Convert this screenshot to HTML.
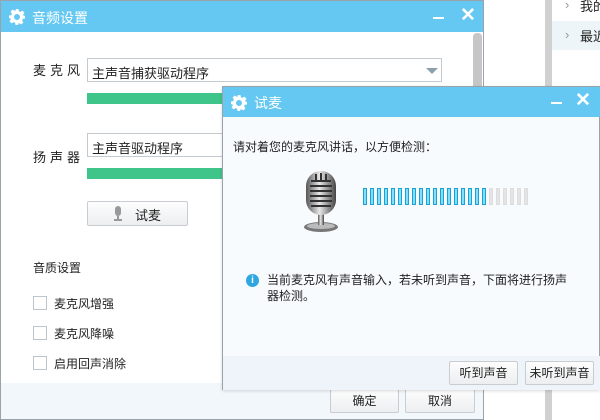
<!DOCTYPE html><html><head><meta charset="utf-8"><style>
*{margin:0;padding:0;box-sizing:border-box}
body{width:600px;height:420px;overflow:hidden;background:#fff;font-family:"Liberation Sans","Noto Sans CJK SC",sans-serif;font-size:12px;color:#222;position:relative}
.a{position:absolute;white-space:nowrap}
.tb{background:#64c8f2;color:#fff;font-size:14px}
.btn{position:absolute;border:1px solid #c9ccd0;border-radius:2px;background:linear-gradient(#fdfdfd,#eceef0);text-align:center;font-size:12px;color:#222}
.cb{position:absolute;width:14px;height:14px;border:1px solid #bcc5cc;background:#fff}
</style></head><body>
<div class="a" style="left:545px;top:0;width:7px;height:420px;background:#d0d0d0"></div>
<div class="a" style="left:552px;top:21px;width:48px;height:29px;background:#eef5f8"></div>
<div class="a" style="left:565px;top:-3px;color:#999;font-size:13px">›</div>
<div class="a" style="left:580px;top:-4px;font-size:13px">我的</div>
<div class="a" style="left:565px;top:27px;color:#999;font-size:13px">›</div>
<div class="a" style="left:580px;top:26px;font-size:13px">最近</div>
<div class="a" style="left:0;top:0;width:484px;height:420px;border:1px solid #9aa3aa;background:#fff">
<div class="a tb" style="left:0;top:0;width:482px;height:31px"></div>
<svg class="a" style="left:8px;top:8px" width="16" height="16" viewBox="0 0 16 16"><path fill="#fff" d="M6.5 0h3l.4 2.2 1.6.7 1.9-1.3 2.1 2.1-1.3 1.9.7 1.6L16 6.5v3l-2.2.4-.7 1.6 1.3 1.9-2.1 2.1-1.9-1.3-1.6.7L9.5 16h-3l-.4-2.2-1.6-.7-1.9 1.3-2.1-2.1 1.3-1.9-.7-1.6L0 9.5v-3l2.2-.4.7-1.6-1.3-1.9 2.1-2.1 1.9 1.3 1.6-.7zM8 5a3 3 0 100 6 3 3 0 000-6z"/></svg>
<div class="a" style="left:31px;top:7px;color:#fff;font-size:14px">音频设置</div>
<div class="a" style="left:432px;top:16px;width:11px;height:2px;background:#fff"></div>
<div class="a" style="left:459px;top:3px;color:#fff;font-size:19px;font-weight:bold">✕</div>
<div class="a" style="left:472px;top:32px;width:9px;height:350px;background:#c6c6c6;border-radius:4px 4px 0 0"></div>
<div class="a" style="left:32px;top:59px;font-size:13px;letter-spacing:4px">麦克风</div>
<div class="a" style="left:86px;top:57px;width:355px;height:24px;border:1px solid #c3cad0;padding:4px 4px;font-size:13px">主声音捕获驱动程序</div>
<div class="a" style="left:425px;top:67px;border:6px solid transparent;border-top:6px solid #8aa0ad;border-bottom:0"></div>
<div class="a" style="left:86px;top:92px;width:150px;height:11px;background:#3fc489"></div>
<div class="a" style="left:32px;top:146px;font-size:13px;letter-spacing:4px">扬声器</div>
<div class="a" style="left:86px;top:132px;width:150px;height:24px;border:1px solid #c3cad0;padding:4px 4px;font-size:13px">主声音驱动程序</div>
<div class="a" style="left:86px;top:167px;width:150px;height:11px;background:#3fc489"></div>
<div class="btn" style="left:86px;top:200px;width:101px;height:25px;line-height:23px;font-size:13px"></div>
<svg class="a" style="left:112px;top:205px" width="10" height="15" viewBox="0 0 10 15"><rect x="2" y="0" width="6" height="10" rx="3" fill="#999"/><rect x="4" y="10" width="2" height="3" fill="#999"/><rect x="1" y="13" width="8" height="2" fill="#999"/></svg>
<div class="a" style="left:134px;top:204px;font-size:13px">试麦</div>
<div class="a" style="left:32px;top:258px;font-size:12px">音质设置</div>
<div class="cb" style="left:32px;top:295px"></div><div class="a" style="left:53px;top:294px">麦克风增强</div>
<div class="cb" style="left:32px;top:325px"></div><div class="a" style="left:53px;top:324px">麦克风降噪</div>
<div class="cb" style="left:32px;top:355px"></div><div class="a" style="left:53px;top:354px">启用回声消除</div>
<div class="a" style="left:0;top:382px;width:482px;height:36px;background:#f2f7fc"></div>
<div class="btn" style="left:329px;top:388px;width:69px;height:24px;line-height:22px">确定</div>
<div class="btn" style="left:404px;top:388px;width:70px;height:24px;line-height:22px">取消</div>
</div>
<div class="a" style="left:222px;top:86px;width:378px;height:304px;border:1px solid #9aa3aa;background:#f7fbfe;box-shadow:0 1px 3px rgba(0,0,0,.15)">
<div class="a tb" style="left:0;top:0;width:377px;height:30px"></div>
<svg class="a" style="left:8px;top:8px" width="16" height="16" viewBox="0 0 16 16"><path fill="#fff" d="M6.5 0h3l.4 2.2 1.6.7 1.9-1.3 2.1 2.1-1.3 1.9.7 1.6L16 6.5v3l-2.2.4-.7 1.6 1.3 1.9-2.1 2.1-1.9-1.3-1.6.7L9.5 16h-3l-.4-2.2-1.6-.7-1.9 1.3-2.1-2.1 1.3-1.9-.7-1.6L0 9.5v-3l2.2-.4.7-1.6-1.3-1.9 2.1-2.1 1.9 1.3 1.6-.7zM8 5a3 3 0 100 6 3 3 0 000-6z"/></svg>
<div class="a" style="left:31px;top:6px;color:#fff;font-size:14px">试麦</div>
<div class="a" style="left:328px;top:15px;width:11px;height:2px;background:#fff"></div>
<div class="a" style="left:352px;top:2px;color:#fff;font-size:19px;font-weight:bold">✕</div>
<div class="a" style="left:10px;top:51px">请对着您的麦克风讲话，以方便检测：</div>
<svg class="a" style="left:80px;top:84px" width="38" height="62" viewBox="0 0 38 62">
<defs><linearGradient id="g" x1="0" x2="1"><stop offset="0" stop-color="#555"/><stop offset=".45" stop-color="#e8e8e8"/><stop offset="1" stop-color="#444"/></linearGradient></defs>
<ellipse cx="18" cy="56" rx="17" ry="5" fill="#777"/><ellipse cx="18" cy="55" rx="14" ry="3" fill="#bbb"/>
<rect x="15" y="40" width="6" height="14" fill="url(#g)"/>
<rect x="3" y="0" width="30" height="44" rx="15" fill="url(#g)"/>
<g fill="#333"><rect x="8" y="9" width="20" height="2"/><rect x="7" y="14" width="22" height="2"/><rect x="7" y="19" width="22" height="2"/><rect x="7" y="24" width="22" height="2"/><rect x="7" y="29" width="22" height="2"/><rect x="8" y="34" width="20" height="2"/>
<rect x="12" y="3" width="2" height="6"/><rect x="17" y="2" width="2" height="7"/><rect x="22" y="3" width="2" height="6"/></g>
</svg>
<div class="a" style="left:140px;top:101px;display:flex;gap:3px">
<script>for(let i=0;i<24;i++)document.write('<div style="width:4px;height:17px;border:1px solid '+(i<18?'#1e9fd6;background:#7fe0fb':'#ddd;background:#e4e4e4')+'"></div>')</script>
</div>
<div class="a" style="left:23px;top:187px;width:13px;height:13px;border-radius:50%;background:#2ea7e0;color:#fff;font-size:10px;font-weight:bold;text-align:center;line-height:13px">i</div>
<div class="a" style="left:44px;top:185px;width:310px;line-height:16px;white-space:normal">当前麦克风有声音输入，若未听到声音，下面将进行扬声器检测。</div>
<div class="a" style="left:0;top:269px;width:377px;height:34px;background:#eef4fa"></div>
<div class="btn" style="left:226px;top:274px;width:69px;height:24px;line-height:22px">听到声音</div>
<div class="btn" style="left:302px;top:274px;width:69px;height:24px;line-height:22px">未听到声音</div>
</div>
</body></html>
